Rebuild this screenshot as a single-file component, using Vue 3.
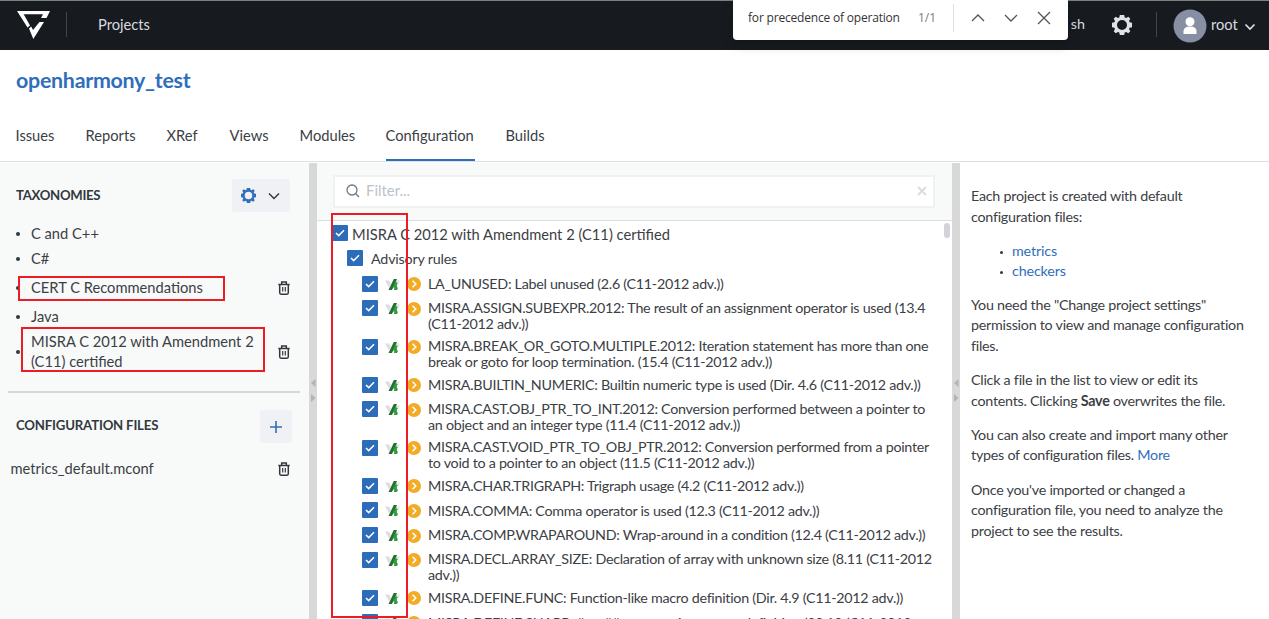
<script setup>
const tabs = [
  { name: 'Issues', w: 39 },
  { name: 'Reports', w: 50 },
  { name: 'XRef', w: 31 },
  { name: 'Views', w: 39 },
  { name: 'Modules', w: 56 },
  { name: 'Configuration', w: 89, active: true },
  { name: 'Builds', w: 40 },
]
const taxonomies = [
  { lines: ['C and C++'], h: 25 },
  { lines: ['C#'], h: 25 },
  { lines: ['CERT C Recommendations'], h: 33, removable: true },
  { lines: ['Java'], h: 25 },
  { lines: ['MISRA C 2012 with Amendment 2', '(C11) certified'], h: 46, removable: true },
]
const rules = [
  ['LA_UNUSED: Label unused (2.6 (C11-2012 adv.))'],
  ['MISRA.ASSIGN.SUBEXPR.2012: The result of an assignment operator is used (13.4', '(C11-2012 adv.))'],
  ['MISRA.BREAK_OR_GOTO.MULTIPLE.2012: Iteration statement has more than one', 'break or goto for loop termination. (15.4 (C11-2012 adv.))'],
  ['MISRA.BUILTIN_NUMERIC: Builtin numeric type is used (Dir. 4.6 (C11-2012 adv.))'],
  ['MISRA.CAST.OBJ_PTR_TO_INT.2012: Conversion performed between a pointer to', 'an object and an integer type (11.4 (C11-2012 adv.))'],
  ['MISRA.CAST.VOID_PTR_TO_OBJ_PTR.2012: Conversion performed from a pointer', 'to void to a pointer to an object (11.5 (C11-2012 adv.))'],
  ['MISRA.CHAR.TRIGRAPH: Trigraph usage (4.2 (C11-2012 adv.))'],
  ['MISRA.COMMA: Comma operator is used (12.3 (C11-2012 adv.))'],
  ['MISRA.COMP.WRAPAROUND: Wrap-around in a condition (12.4 (C11-2012 adv.))'],
  ['MISRA.DECL.ARRAY_SIZE: Declaration of array with unknown size (8.11 (C11-2012', 'adv.))'],
  ['MISRA.DEFINE.FUNC: Function-like macro definition (Dir. 4.9 (C11-2012 adv.))'],
  ['MISRA.DEFINE.SHARP: # or ## operator in a macro definition (20.10 (C11-2012'],
]
const help = [
  ['You need the "Change project settings"', 'permission to view and manage configuration', 'files.'],
]
</script>

<template>
  <div class="page">
    <header class="top">
      <svg class="logo" width="34" height="30" viewBox="0 0 34 30">
        <path d="M0 1H33L29.5 8H24L26 4.3H6.7L13 15.5L10.5 17.5Z" fill="#fff" />
        <path d="M12 18.5L14.2 16.5L16 20L22.5 12H27L16.3 29Z" fill="#fff" />
      </svg>
      <i class="rule"></i>
      <span class="projects">Projects</span>
      <span class="lang">sh</span>
      <svg class="gear" width="20" height="20" viewBox="0 0 20 20">
        <path fill="#dfe2e8" fill-rule="evenodd" d="M7.8 0h4.4l.5 2.4 1.4.6L16.300 1.700l2 2L17 5.900l.6 1.400L20 7.800v4.400l-2.400.5-.6 1.400 1.300 2.200-2 2-2.200-1.300-1.400.6-.5 2.400H7.800l-.5-2.400-1.400-.6-2.200 1.300-2-2L3 14.100l-.6-1.400L0 12.200V7.800l2.400-.5L3 5.900 1.700 3.700l2-2L5.900 3l1.400-.6zM10 5a5 5 0 100 10 5 5 0 000-10z" />
      </svg>
      <i class="rule second"></i>
      <svg class="avatar" width="34" height="34" viewBox="0 0 34 34">
        <circle cx="17" cy="17" r="16.500" fill="#868fa3" />
        <circle cx="17" cy="12.800" r="4.500" fill="#fff" />
        <path d="M10.500 25V22.500Q10.500 17.500 17 17.500T23.500 22.500V25Z" fill="#fff" />
      </svg>
      <span class="user">root</span>
      <svg class="caret" width="12" height="8" viewBox="0 0 12 8"><path d="M1.500 1.500L6 6L10.500 1.500" fill="none" stroke="#dfe2e8" stroke-width="1.600" /></svg>
    </header>

    <div class="find">
      <span class="query">for precedence of operation</span>
      <span class="count">1/1</span>
      <i></i>
      <svg width="82" height="16" viewBox="0 0 82 16" fill="none" stroke="#555" stroke-width="1.300">
        <path d="M2 11L8 5L14 11M35 5L41 11L47 5M68 2L80 14M80 2L68 14" />
      </svg>
    </div>

    <h1>openharmony_test</h1>
    <nav>
      <span v-for="t in tabs" :key="t.name" :class="{ active: t.active }" :style="{ width: t.w + 'px' }">{{ t.name }}</span>
    </nav>

    <main>
      <aside class="left">
        <div class="head">
          <h2>TAXONOMIES</h2>
          <button class="menu">
            <svg width="15" height="15" viewBox="0 0 20 20">
              <path fill="#2f6eba" fill-rule="evenodd" d="M7.8 0h4.4l.5 2.4 1.4.6L16.300 1.700l2 2L17 5.900l.6 1.400L20 7.800v4.400l-2.400.5-.6 1.400 1.300 2.200-2 2-2.200-1.300-1.400.6-.5 2.400H7.800l-.5-2.400-1.400-.6-2.200 1.300-2-2L3 14.100l-.6-1.400L0 12.200V7.800l2.400-.5L3 5.900 1.700 3.700l2-2L5.900 3l1.400-.6zM10 5a5 5 0 100 10 5 5 0 000-10z" />
            </svg>
            <svg width="12" height="8" viewBox="0 0 12 8"><path d="M1 1.500L6 6.500L11 1.500" fill="none" stroke="#33383e" stroke-width="1.500" /></svg>
          </button>
        </div>
        <div class="taxes">
          <div v-for="t in taxonomies" :key="t.lines[0]" class="tax" :style="{ height: t.h + 'px' }">
            <i class="dot"></i>
            <div><p v-for="l in t.lines" :key="l">{{ l }}</p></div>
            <svg v-if="t.removable" class="trash" width="12" height="14" viewBox="0 0 12 14" fill="none" stroke="#33383e" stroke-width="1.500">
              <path d="M.3 3.500H11.700M3.700 3.300V1H8.300V3.300M1.700 3.500V11.800Q1.700 13.200 3 13.200H9Q10.300 13.200 10.300 11.800V3.500" /><path d="M4.700 6V10.500M7.300 6V10.500" stroke-width="1.200" />
            </svg>
          </div>
        </div>
        <div class="divider"></div>
        <div class="head conf">
          <h2>CONFIGURATION FILES</h2>
          <button class="add"><svg width="12" height="12" viewBox="0 0 12 12"><path d="M6 0V12M0 6H12" stroke="#2f6eba" stroke-width="1.600" /></svg></button>
        </div>
        <div class="file">
          <span>metrics_default.mconf</span>
          <svg class="trash" width="12" height="14" viewBox="0 0 12 14" fill="none" stroke="#33383e" stroke-width="1.500">
            <path d="M.3 3.500H11.700M3.700 3.300V1H8.300V3.300M1.700 3.500V11.800Q1.700 13.200 3 13.200H9Q10.300 13.200 10.300 11.800V3.500" /><path d="M4.700 6V10.500M7.300 6V10.500" stroke-width="1.200" />
          </svg>
        </div>
      </aside>
      <div class="split"><svg width="8" height="24" viewBox="0 0 8 24"><path d="M6.500 0V8L2 4ZM2 15V23L6.500 19Z" fill="#b3b3b3" /></svg></div>

      <section class="middle">
        <div class="filterbar">
          <div class="filter">
            <svg width="14" height="14" viewBox="0 0 14 14" fill="none" stroke="#6d7785" stroke-width="1.300"><circle cx="6" cy="6" r="5" /><path d="M9.800 9.800L13 13" /></svg>
            <span>Filter...</span>
            <svg width="10" height="10" viewBox="0 0 10 10"><path d="M1 1L9 9M9 1L1 9" stroke="#dcdcdc" stroke-width="2" /></svg>
          </div>
        </div>
        <div class="tree">
          <i class="thumb"></i>
          <div class="node root">
            <svg class="cb" width="16" height="16" viewBox="0 0 16 16"><rect width="16" height="16" rx="1" fill="#2d6cb8" /><path d="M4 8L6.700 10.600L12 5.300" fill="none" stroke="#fff" stroke-width="1.500" /></svg>
            <span>MISRA C 2012 with Amendment 2 (C11) certified</span>
          </div>
          <div class="node advisory">
            <svg class="cb" width="16" height="16" viewBox="0 0 16 16"><rect width="16" height="16" rx="1" fill="#2d6cb8" /><path d="M4 8L6.700 10.600L12 5.300" fill="none" stroke="#fff" stroke-width="1.500" /></svg>
            <span>Advisory rules</span>
          </div>
          <div v-for="r in rules" :key="r[0]" class="item" :class="{ two: r.length > 1 }">
            <svg class="cb" width="16" height="16" viewBox="0 0 16 16"><rect width="16" height="16" rx="1" fill="#2d6cb8" /><path d="M4 8L6.700 10.600L12 5.300" fill="none" stroke="#fff" stroke-width="1.500" /></svg>
            <svg class="va" width="15" height="12" viewBox="0 0 15 12">
              <path d="M0 1.500H4L6 5L4 8.500Z" fill="#dedede" /><path d="M12 1.500H15L13 6Z" fill="#e5e5e5" />
              <path d="M8.800 0H12L7 11H3.500Z" fill="#286d35" /><path d="M11.500 1L11.300 3.500L13 4L11.800 5.500L12 8.500H13.200L12 11H9L9.300 8.500H7.500L9 5.500Z" fill="#2e9e3d" />
            </svg>
            <svg class="go" width="14" height="14" viewBox="0 0 14 14"><circle cx="7" cy="7" r="7" fill="#f1ab25" /><path d="M5.500 3.800L8.800 7L5.500 10.200" fill="none" stroke="#fff" stroke-width="1.500" /></svg>
            <div class="txt"><p v-for="l in r" :key="l">{{ l }}</p></div>
          </div>
        </div>
      </section>
      <div class="split"><svg width="8" height="24" viewBox="0 0 8 24"><path d="M6.500 0V8L2 4ZM2 15V23L6.500 19Z" fill="#b3b3b3" /></svg></div>

      <aside class="right">
        <p>Each project is created with default<br>configuration files:</p>
        <ul><li><a>metrics</a></li><li><a>checkers</a></li></ul>
        <p v-for="(h, i) in help" :key="i"><template v-for="l in h" :key="l">{{ l }}<br></template></p>
        <p>Click a file in the list to view or edit its<br>contents. Clicking <b>Save</b> overwrites the file.</p>
        <p>You can also create and import many other<br>types of configuration files. <a>More</a></p>
        <p>Once you've imported or changed a<br>configuration file, you need to analyze the<br>project to see the results.</p>
      </aside>
    </main>

    <div class="mark m1"></div>
    <div class="mark m2"></div>
    <div class="mark m3"></div>
  </div>
</template>

<style>
body { margin: 0; overflow: hidden; }
</style>
<style scoped>
.page { position: relative; width: 1269px; height: 619px; overflow: hidden; background: #fff; color: #3b4045; font-family: Lato, "Liberation Sans", sans-serif; font-size: 14.700px; display: flex; flex-direction: column; }
.page * { box-sizing: border-box; }
p, h1, h2, ul { margin: 0; padding: 0; white-space: nowrap; }
svg { display: block; flex: none; }
.top { height: 50px; flex: none; background: #171b1f; border-top: 1px solid #7b827c; display: flex; align-items: center; color: #d6dae0; padding-bottom: 2px; }
.logo { margin: 0 0 0 17px; }
.rule { width: 1px; height: 25px; background: #42464a; margin-left: 15px; }
.projects { margin: -2px 0 0 31px; width: 52px; }
.lang { margin: -2px 0 0 auto; font-size: 14.300px; }
.gear { margin-left: 27px; }
.rule.second { margin-left: 24px; }
.avatar { margin: 2px 0 0 16px; }
.user { margin: -2px 0 0 4px; width: 27px; }
.caret { margin: 4px 13px 0 6px; }
.find { position: absolute; left: 733px; top: 0; width: 335px; height: 40px; background: #fff; border-radius: 0 0 4px 4px; box-shadow: 0 5px 12px rgba(0,0,0,.22); display: flex; align-items: center; padding: 0 16px 5px 15px; font-family: "Open Sans", sans-serif; font-size: 12px; letter-spacing: -.19px; color: #333; white-space: nowrap; }
.query { width: 152px; }
.count { margin-left: 18px; width: 18px; color: #7b7b7b; letter-spacing: 0; }
.find i { width: 1px; height: 28px; margin-left: 17px; background: #e1e1e1; }
.find svg { margin-left: 16px; }
h1 { height: 60px; flex: none; line-height: 60px; padding-left: 16px; color: #2f6eba; font-size: 21.400px; font-weight: 700; letter-spacing: -.27px; }
nav { height: 52px; flex: none; display: flex; gap: 31px; padding-left: 15.500px; border-bottom: 1px solid #dcdfe3; }
nav span { height: 51px; line-height: 51px; white-space: nowrap; }
nav .active { border-bottom: 2px solid #2f6eba; margin-left: -1px; }
nav span:nth-child(3) { margin-right: 1px; }
main { flex: 1; min-height: 0; display: flex; padding-top: 1px; }
.left { width: 309px; background: #f8faf9; flex: none; }
.head { display: flex; align-items: center; justify-content: space-between; padding: 16px 19px 0 16px; }
h2 { font-size: 13.200px; font-weight: 700; color: #33383e; letter-spacing: -.3px; margin-top: -2px; }
.conf h2 { margin-top: -3px; letter-spacing: -.18px; }
button { border: 0; background: #f0f1f4; border-radius: 2px; padding: 0; height: 33px; display: flex; align-items: center; justify-content: center; }
.menu { width: 58px; gap: 12px; padding-right: 2px; }
.taxes { padding-top: 9px; }
.tax { display: flex; align-items: center; padding: 0 19px 0 16px; line-height: 20.500px; position: relative; }
.tax:last-child p { margin-top: -1px; margin-bottom: 1px; }
.dot { width: 4px; height: 4px; border-radius: 50%; background: #33383e; margin-right: 11px; flex: none; }
.trash { margin-left: auto; }
.divider { height: 2px; background: #d5d7dc; margin: 16px 9px 0 8px; }
.conf { padding: 17px 17px 0 16px; }
.add { width: 32px; }
.file { display: flex; align-items: center; padding: 0 19px 0 10.500px; height: 52px; }
.file span { margin-top: -2px; }
.split { width: 8px; background: #d8d8d8; flex: none; padding-top: 216px; }
.middle { width: 635px; flex: none; overflow: hidden; }
.filterbar { height: 58px; background: #f8faf9; border-bottom: 1px solid #dcdfe2; padding: 12px 17px 0 16px; }
.filter { height: 33px; border: 2px solid #f0f1f1; background: #fff; display: flex; align-items: center; padding: 0 6px 2px 11px; color: #bcc2ca; font-size: 14.900px; }
.filter svg { margin-top: 1px; }
.filter span { margin: -1px 0 0 6px; flex: 1; }
.tree { position: relative; }
.thumb { position: absolute; right: 2px; top: 2px; width: 6px; height: 15px; border-radius: 3px; background: #d2d4d9; }
.node { display: flex; height: 24.600px; align-items: center; white-space: nowrap; }
.root { padding-left: 14.500px; }
.root .cb { margin-top: -1px; }
.root span { margin: 2px 0 0 4.500px; }
.advisory { padding-left: 29.500px; }
.advisory .cb { margin-top: 0; }
.advisory span { margin: 2px 0 0 8.500px; font-size: 14.300px; letter-spacing: -.2px; }
.item { display: flex; height: 24.640px; padding: 5.600px 0 0 45px; font-size: 14.300px; letter-spacing: -.28px; }
.item.two { height: 38.200px; }
.va { margin: 3px 0 0 7px; }
.go { margin: 1.500px 0 0 7px; }
.txt { margin-left: 7px; line-height: 16.200px; padding-top: .4px; }
.two .txt { margin-top: -1px; }
.right { padding: 23px 0 0 11px; line-height: 20.600px; flex: 1; font-size: 14.300px; letter-spacing: -.25px; }
.right p { margin-bottom: 13.500px; }
.right ul { list-style: none; margin-bottom: 13px; padding-left: 29px; letter-spacing: -.15px; }
.right li::before { content: ''; display: inline-block; width: 3px; height: 3px; border-radius: 50%; background: #33383e; margin-right: 9px; vertical-align: 2px; }
a { color: #2f6eba; }
.mark { position: absolute; border: 2px solid #ec1c24; }
.m1 { left: 18px; top: 276px; width: 207px; height: 25px; }
.m2 { left: 21px; top: 327px; width: 244px; height: 45px; }
.m3 { left: 331px; top: 213px; width: 77px; height: 405px; }
</style>
